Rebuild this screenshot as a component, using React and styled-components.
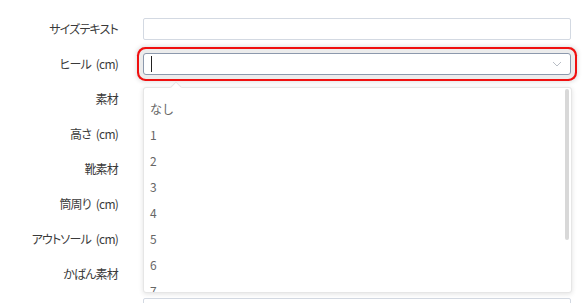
import React from "react";
import styled, { createGlobalStyle } from "styled-components";

const Global = createGlobalStyle`
  html, body { margin: 0; padding: 0; background: #fff; overflow: hidden; }
  body { font-family: "Noto Sans CJK JP", "Noto Sans", sans-serif; }
`;

const Form = styled.div`
  display: flex;
  flex-direction: column;
  gap: 13px;
  padding-top: 18px;
  width: 571px;
`;

const Row = styled.div`
  display: grid;
  grid-template-columns: 118px 1fr;
  column-gap: 25px;
  align-items: center;
  position: relative;
  z-index: ${(p) => (p.$open ? 5 : 1)};
`;

const Label = styled.div`
  text-align: right;
  font-size: 12px;
  line-height: 16px;
  color: #3a3a3a;
  font-feature-settings: "palt";
  letter-spacing: -0.8px;
  word-spacing: 3px;
  white-space: nowrap;
`;

const TextInput = styled.div`
  height: 22px;
  box-sizing: border-box;
  border: 1px solid #d3d9e2;
  border-radius: 2px;
  background: #fff;
`;

const SelectWrap = styled.div`
  position: relative;
`;

const SelectBox = styled.div`
  height: 22px;
  box-sizing: border-box;
  border: 1px solid #8c99ad;
  border-radius: 3px;
  background: #fff;
  display: flex;
  align-items: center;
  justify-content: space-between;
  padding: 0 8px 0 7px;
  box-shadow: 0 0 0 4px #ececec, 0 0 0 6px #f01010, 0 0 4px 7px rgba(0, 0, 0, 0.12);
`;

const Caret = styled.span`
  width: 1px;
  height: 16px;
  background: #222;
`;

const Dropdown = styled.div`
  position: absolute;
  left: 0;
  right: -1px;
  top: 34px;
  height: 206px;
  box-sizing: border-box;
  background: #fff;
  border: 1px solid #e6e6e6;
  border-radius: 3px;
  box-shadow: 0 1px 5px rgba(0, 0, 0, 0.12);
  padding-top: 7px;
  overflow: hidden;
`;

const Arrow = styled.div`
  position: absolute;
  top: 30px;
  left: 29px;
  width: 7px;
  height: 7px;
  background: #fff;
  border-left: 1px solid #e6e6e6;
  border-top: 1px solid #e6e6e6;
  transform: rotate(45deg);
  z-index: 6;
`;

const Option = styled.div`
  height: 26px;
  display: flex;
  align-items: center;
  padding-left: 6px;
  font-size: 12px;
  color: #666;
  font-family: "Noto Sans CJK JP", "Open Sans", sans-serif;
`;

const Thumb = styled.div`
  position: absolute;
  right: 2px;
  top: 1px;
  width: 4px;
  height: 151px;
  border-radius: 2px;
  background: #d8d8d8;
`;

const labels = [
  "サイズテキスト",
  "ヒール (cm)",
  "素材",
  "高さ (cm)",
  "靴素材",
  "筒周り (cm)",
  "アウトソール (cm)",
  "かばん素材",
  "",
];

const options = ["なし", "1", "2", "3", "4", "5", "6", "7", "8"];

export default function App() {
  return (
    <>
      <Global />
      <Form>
        {labels.map((l, i) =>
          i === 1 ? (
            <Row key={i} $open>
              <Label>{l}</Label>
              <SelectWrap>
                <SelectBox>
                  <Caret />
                  <svg width="10" height="6" viewBox="0 0 10 6">
                    <path d="M1 1l4 4 4-4" fill="none" stroke="#b9bec6" strokeWidth="1" />
                  </svg>
                </SelectBox>
                <Arrow />
                <Dropdown>
                  {options.map((o) => (
                    <Option key={o}>{o}</Option>
                  ))}
                  <Thumb />
                </Dropdown>
              </SelectWrap>
            </Row>
          ) : (
            <Row key={i}>
              <Label>{l}</Label>
              <TextInput />
            </Row>
          )
        )}
      </Form>
    </>
  );
}
